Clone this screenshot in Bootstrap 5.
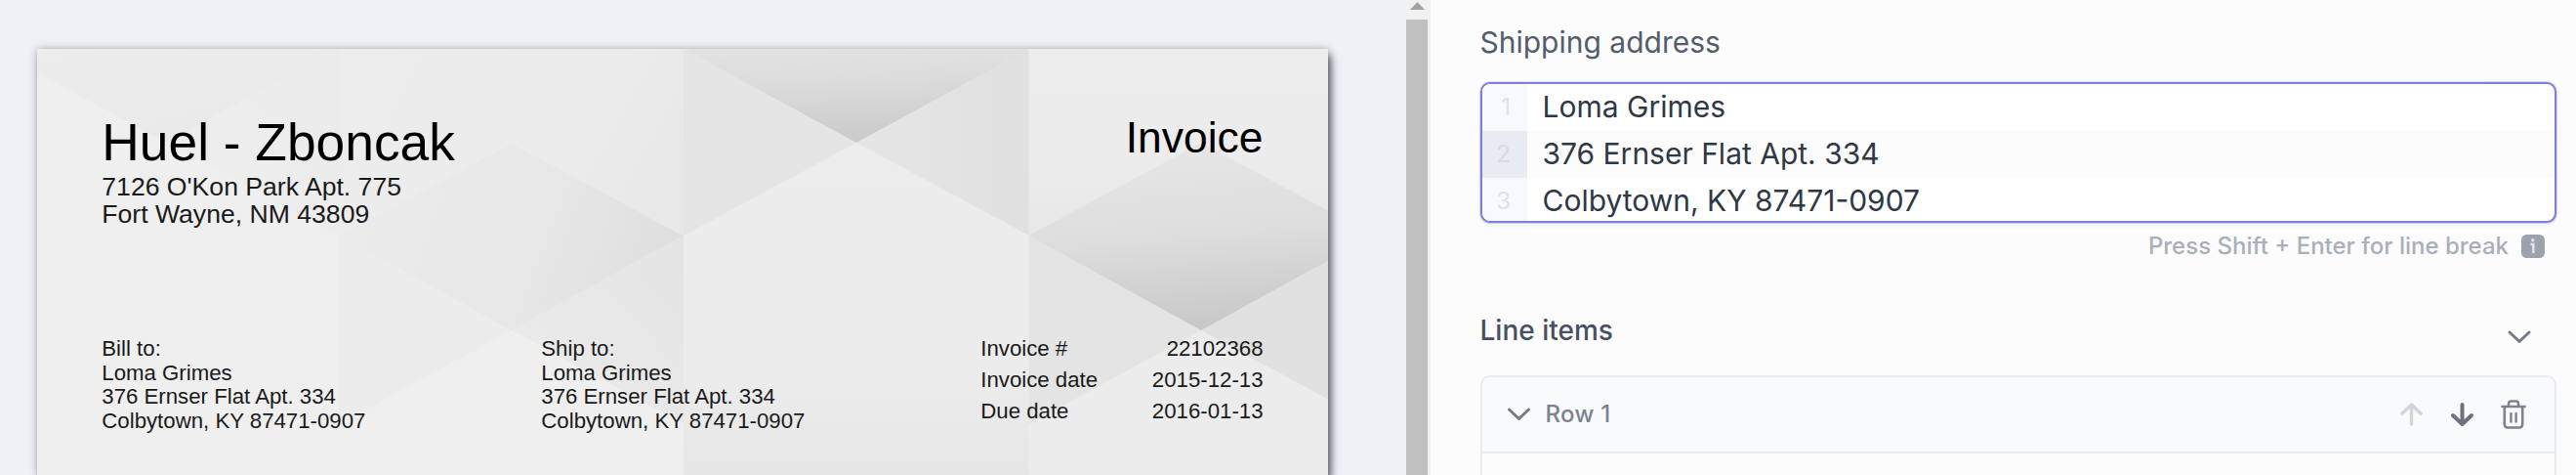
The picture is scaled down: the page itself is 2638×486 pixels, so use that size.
<!DOCTYPE html>
<html lang="en">
<head>
<meta charset="utf-8">
<title>Invoice editor</title>
<link href="https://cdn.jsdelivr.net/npm/bootstrap@5.3.0/dist/css/bootstrap.min.css" rel="stylesheet">
<style>
  body { height: 486px; font-family: Inter, sans-serif; background: #fcfcfc; }
  .preview-pane { width: 1438px; height: 486px; background: #eff1f6; padding: 50px 78px 0 38px; }
  .paper { height: 436px; width: 1322px; padding: 65px 66.5px 0 66.3px; color: #1a1a1a; background: #eee;
    font: 22.22px/24.5px "Liberation Sans", Arial, sans-serif;
    box-shadow: 4px 6px 8px -1px rgba(50,50,60,.75), 0 0 8px rgba(60,60,80,.35); }
  .paper-art { position: absolute; inset: 0; width: 100%; height: 100%; }
  .seller-name { font-size: 53.33px; line-height: 61px; color: #000; }
  .seller-address { font-size: 26.6px; line-height: 28.2px; height: 167.5px; padding-top: .6px; }
  .doc-title { font-size: 44.44px; line-height: 50px; color: #000; padding-top: 1px; }
  .party { width: 450px; }
  .party-label { line-height: 26px; }
  .meta-list { line-height: 32px; margin-top: -3px; }
  .scroll-track { width: 27px; height: 486px; background: #f1f1f1; padding: 2px 3px 0 2px; }
  .scroll-track svg { display: block; margin: 0 auto 10px; }
  .scroll-thumb { height: 466px; background: #c1c1c1; }
  .form-pane { height: 486px; padding: 25px 20px 0 50.5px; }
  .field-label { font-size: 30px; line-height: 36px; color: #535d6c; margin-bottom: 23px; }
  .editor { height: 144px; border: 2px solid #7c82d8; border-radius: 10px; background: #fff;
    box-shadow: 0 0 0 .8px rgba(124,130,216,.35), 0 3px 4px rgba(0,0,0,.05); }
  .editor-line { height: 48px; flex: none; color: #303846; }
  .line-number { width: 46px; padding-right: 16.5px; background: #f8f9fd; color: #dfe1e7; font-size: 24px; line-height: 48px; }
  .line-text { font-size: 30px; line-height: 46px; padding-left: 16px; }
  .active-line { background: #fcfcfc; }
  .active-line .line-number { background: #e8ebf2; color: #d7dae2; }
  .hint { height: 48px; font-size: 24px; color: #a9afbb; padding-right: 12px; line-height: 46px; gap: 13px; }
  .semi { font-weight: 500; }
  .section-title { font-size: 28px; line-height: 34px; color: #465061; }
  .section-head { margin-top: 45px; height: 63px; padding-right: 25px; }
  .section-head svg { margin-top: 17px; }
  .row-card { border: 2px solid #e8eaee; border-bottom: 0; border-radius: 10px 10px 0 0; height: 102px; }
  .row-head { height: 78px; background: #f9fafc; border-bottom: 2px solid #e8eaee; padding: 0 29px 0 25px; color: #7c828f; }
  .row-name { font-size: 24px; letter-spacing: .3px; line-height: 36px; padding-left: 14px; }
  .row-actions { gap: 28px; }
  .stroke-icon { fill: none; stroke: #747b88; stroke-width: 3; stroke-linecap: round; stroke-linejoin: round; }
</style>
</head>
<body class="d-flex overflow-hidden">
  <section class="preview-pane flex-shrink-0">
    <div class="paper position-relative">
      <svg class="paper-art" viewBox="38 50 1322 436" preserveAspectRatio="none">
        <defs>
          <linearGradient id="dark" x1="0" y1="0" x2=".15" y2="1"><stop offset="0" stop-color="#e3e3e3"/><stop offset=".4" stop-color="#dcdcdc"/><stop offset="1" stop-color="#cbcbcb"/></linearGradient>
          <linearGradient id="dia" x1=".4" y1="0" x2=".55" y2="1"><stop offset="0" stop-color="#e7e7e7"/><stop offset=".5" stop-color="#dddddd"/><stop offset="1" stop-color="#c7c7c7"/></linearGradient>
          <linearGradient id="soft" x1="0" y1=".4" x2="1" y2=".6"><stop offset="0" stop-color="#ebebeb"/><stop offset=".6" stop-color="#e7e7e7"/><stop offset="1" stop-color="#dedede"/></linearGradient>
          <linearGradient id="upper" x1="0" y1=".3" x2="1" y2=".6"><stop offset="0" stop-color="#ededed"/><stop offset=".7" stop-color="#ebebeb"/><stop offset="1" stop-color="#e8e8e8"/></linearGradient>
          <linearGradient id="corner" x1="0" y1="0" x2=".8" y2="1"><stop offset="0" stop-color="#ededed"/><stop offset=".5" stop-color="#ebebeb"/><stop offset="1" stop-color="#e9e9e9"/></linearGradient>
          <linearGradient id="fold" x1="0" y1="1" x2="1" y2="0"><stop offset="0" stop-color="#efefef"/><stop offset="1" stop-color="#ebebeb"/></linearGradient>
          <linearGradient id="face" x1="0" y1="0" x2="0" y2="1"><stop offset="0" stop-color="#ededed"/><stop offset=".75" stop-color="#ececec"/><stop offset="1" stop-color="#e6e6e6"/></linearGradient>
          <linearGradient id="side" x1="0" y1="0" x2="0" y2="1"><stop offset="0" stop-color="#ededed"/><stop offset=".6" stop-color="#ececec"/><stop offset="1" stop-color="#e7e7e7"/></linearGradient>
          <linearGradient id="wing"><stop offset="0" stop-color="#e6e6e6"/><stop offset="1" stop-color="#e0e0e0"/></linearGradient>
          <linearGradient id="low" x1="0" y1="1" x2="1" y2="0"><stop offset="0" stop-color="#ececec"/><stop offset="1" stop-color="#e4e4e4"/></linearGradient>
        </defs>
        <rect x="38" y="50" width="310" height="436" fill="#efefef"/>
        <path d="M38 74V50H347L170 146Z" fill="url(#corner)"/>
        <path d="M170 146L347 50V241Z" fill="url(#fold)"/>
        <rect x="347" y="50" width="354" height="436" fill="#efefef"/>
        <path d="M347 50H701V241L524 147L347 241Z" fill="url(#upper)"/>
        <path d="M347 241L524 338L347 434Z" fill="#ececec"/>
        <path d="M347 241L524 147L700 241L524 338Z" fill="url(#soft)"/>
        <path d="M524 338L700 241V434Z" fill="url(#low)"/>
        <path d="M524 338L700 434V486H347V434Z" fill="#efefef"/>
        <rect x="700" y="50" width="354" height="436" fill="url(#face)"/>
        <path d="M700 50L877 146L700 241Z" fill="#e5e5e5"/>
        <path d="M1054 50L877 146L1054 241Z" fill="url(#wing)"/>
        <path d="M700 50H1054L877 146Z" fill="url(#dark)"/>
        <path d="M1053.500 50H1361V241H1053.500Z" fill="url(#side)"/>
        <path d="M1053.500 241H1361V486H1053.500Z" fill="#ececec"/>
        <path d="M1053.500 241L1230 338L1053.500 434Z" fill="#e4e4e4"/>
        <path d="M1230 338L1407 241V434Z" fill="#e1e1e1"/>
        <path d="M1053.500 241L1230 146L1407 241L1230 338Z" fill="url(#dia)"/>
      </svg>
      <div class="position-relative">
        <div class="d-flex justify-content-between align-items-start">
          <div>
            <div class="seller-name">Huel - Zboncak</div>
            <div class="seller-address">7126 O'Kon Park Apt. 775<br>Fort Wayne, NM 43809</div>
          </div>
          <div class="doc-title">Invoice</div>
        </div>
        <div class="d-flex">
          <div class="party">
            <div class="party-label">Bill to:</div>
            <div>Loma Grimes</div><div>376 Ernser Flat Apt. 334</div><div>Colbytown, KY 87471-0907</div>
          </div>
          <div class="party">
            <div class="party-label">Ship to:</div>
            <div>Loma Grimes</div><div>376 Ernser Flat Apt. 334</div><div>Colbytown, KY 87471-0907</div>
          </div>
          <div class="meta-list flex-grow-1">
            <div class="d-flex justify-content-between"><span>Invoice #</span><span>22102368</span></div>
            <div class="d-flex justify-content-between"><span>Invoice date</span><span>2015-12-13</span></div>
            <div class="d-flex justify-content-between"><span>Due date</span><span>2016-01-13</span></div>
          </div>
        </div>
      </div>
    </div>
  </section>
  <div class="scroll-track flex-shrink-0">
    <svg width="15" height="8" viewBox="0 0 15 8"><path d="M7.500 0L15 8H0Z" fill="#a2a2a2"/></svg>
    <div class="scroll-thumb"></div>
  </div>
  <main class="form-pane flex-grow-1 overflow-hidden">
    <div class="field-label">Shipping address</div>
    <div class="editor overflow-hidden d-flex flex-column">
      <div class="editor-line d-flex"><div class="line-number text-end">1</div><div class="line-text">Loma Grimes</div></div>
      <div class="editor-line active-line d-flex"><div class="line-number text-end">2</div><div class="line-text">376 Ernser Flat Apt. 334</div></div>
      <div class="editor-line d-flex"><div class="line-number text-end">3</div><div class="line-text">Colbytown, KY 87471-0907</div></div>
    </div>
    <div class="hint semi d-flex justify-content-end align-items-center">
      <span>Press Shift + Enter for line break</span>
      <svg width="24" height="24" viewBox="0 0 24 24"><rect width="24" height="24" rx="5.500" fill="#9ca2ae"/><path d="M9.500 10H12.300V19" fill="none" stroke="#e3e5e9" stroke-width="2.500"/><circle cx="11.800" cy="5.800" r="1.700" fill="#e3e5e9"/></svg>
    </div>
    <div class="section-head d-flex justify-content-between align-items-start">
      <div class="section-title semi">Line items</div>
      <svg class="stroke-icon" width="26" height="14" viewBox="0 0 26 14"><path d="M3 2L13 11.500L23 2"/></svg>
    </div>
    <div class="row-card overflow-hidden">
      <div class="row-head d-flex align-items-center">
        <svg class="stroke-icon" width="26" height="14" viewBox="0 0 26 14"><path d="M2.500 2L12.500 11.500L22.500 2"/></svg>
        <span class="row-name semi flex-grow-1">Row 1</span>
        <div class="row-actions d-flex align-items-center">
          <svg width="24" height="28" viewBox="0 0 24 28" fill="none" stroke="#d2d5da" stroke-width="3.500" stroke-linecap="round" stroke-linejoin="round"><path d="M12.500 24V4M3 13L12.500 4L22 13"/></svg>
          <svg width="24" height="28" viewBox="0 0 24 28" fill="none" stroke="#6c7280" stroke-width="4" stroke-linecap="round" stroke-linejoin="round"><path d="M12.500 4V24M3 15L12.500 24L22 15"/></svg>
          <svg width="26" height="32" viewBox="0 0 26 32" fill="none" stroke="#7c828f" stroke-width="2.600" stroke-linecap="round" stroke-linejoin="round"><path d="M1.500 8H24.500M3.800 8V26Q3.800 29.500 7.300 29.500H18.700Q22.200 29.500 22.200 26V8M8 8V5Q8 2.500 10.500 2.500H15.500Q18 2.500 18 5V8"/><path d="M10.400 15V23.500M15.600 15V23.500" stroke-width="2.400"/></svg>
        </div>
      </div>
    </div>
  </main>
<script src="https://cdn.jsdelivr.net/npm/bootstrap@5.3.0/dist/js/bootstrap.bundle.min.js"></script>
</body>
</html>
